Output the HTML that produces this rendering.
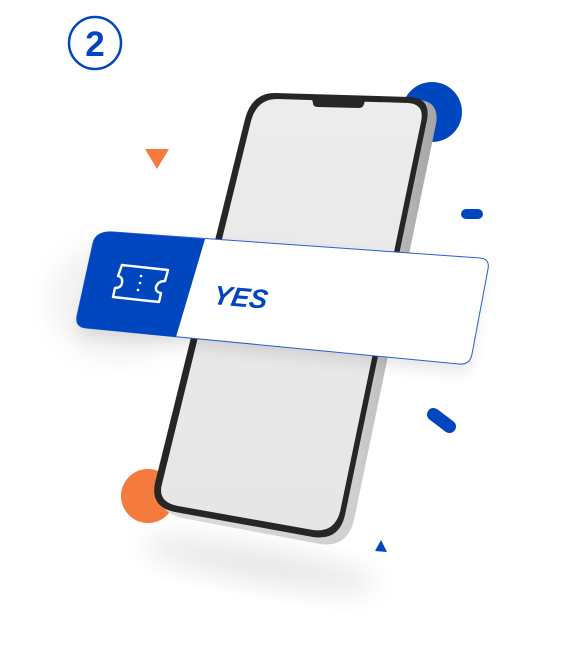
<!DOCTYPE html>
<html><head><meta charset="utf-8"><style>
html,body{margin:0;padding:0;background:#fff;width:565px;height:651px;overflow:hidden}
svg{display:block}
</style></head><body>
<svg width="565" height="651" viewBox="0 0 565 651" xmlns="http://www.w3.org/2000/svg">
<defs>
<filter id="blur" x="-50%" y="-50%" width="200%" height="200%"><feGaussianBlur stdDeviation="14"/></filter>
<filter id="blur2" x="-50%" y="-50%" width="200%" height="200%"><feGaussianBlur stdDeviation="8"/></filter>
<linearGradient id="silver" x1="0" y1="0" x2="1" y2="0">
<stop offset="0" stop-color="#dcdcdc"/><stop offset="0.7" stop-color="#cfcfcf"/><stop offset="1" stop-color="#a5a5a5"/></linearGradient>
<linearGradient id="scr" x1="0" y1="0" x2="0" y2="1">
<stop offset="0" stop-color="#ececec"/><stop offset="1" stop-color="#e6e6e6"/></linearGradient>
</defs>
<circle cx="95" cy="43" r="26" fill="none" stroke="#0046be" stroke-width="2.5"/>
<text x="95" y="56" text-anchor="middle" font-family="Liberation Sans, sans-serif" font-weight="bold" font-size="35" fill="#0046be">2</text>
<circle cx="432" cy="112" r="30" fill="#0046be"/>
<circle cx="148" cy="496" r="27" fill="#f57a3d"/>
<polygon points="145,149 169,149 157,169" fill="#f57a3d"/>
<rect x="461" y="209" width="22" height="10" rx="5" fill="#0046be"/>
<rect x="425" y="414" width="33" height="13" rx="6.5" fill="#0046be" transform="rotate(37 441.5 420.5)"/>
<polygon points="381,540 387,552 375,551" fill="#0046be"/>
<ellipse cx="260" cy="565" rx="120" ry="16" fill="#000" opacity="0.10" filter="url(#blur)" transform="rotate(10 260 565)"/>
<ellipse cx="120" cy="300" rx="70" ry="60" fill="#000" opacity="0.05" filter="url(#blur)"/>
<path d="M283,95 L418,100 Q440,101 436,124 L354,520 Q347,548 320,544 L182,518 Q156,512 162,488 L252,122 Q259,95 283,95 Z" fill="url(#silver)"/>
<path d="M275,93 L410,97 Q431,98 427,120 L345,515 Q339,541 313,537 L175,512 Q150,507 155,483 L245,119 Q252,93 275,93 Z" fill="#262626"/>
<path d="M277,99 L408,103 Q425,104 421,122 L340,512 Q334,533 313,530 L178,506 Q157,502 162,484 L251,121 Q257,99 277,99 Z" fill="url(#scr)"/>
<path d="M311,96 L366,98 L364,104 Q363,108 359,108 L318,107 Q313,107 313,103 Z" fill="#262626"/>
<path d="M103,240 L485,266 L468,372 L77,335 Z" fill="#000" opacity="0.10" filter="url(#blur2)"/>
<path d="M113,232 L480,258 Q490,259 488,269 L472,354 Q470,365 459,364 L86,328 Q75,327 77,316 L93,243 Q96,231 113,232 Z" fill="#fff" stroke="#2a5fd0" stroke-width="1"/>
<path d="M113,232 L205,239 L176,337 L86,328 Q75,327 77,316 L93,243 Q96,231 113,232 Z" fill="#0046be"/>
<path d="M122,265 L168,270 L165,281 Q158,281 156,287 Q155,292 161,293 L159,302 L113,297 L115,288 Q121,288 122,283 Q123,277 118,276 Z" fill="none" stroke="#fff" stroke-width="2.4" stroke-linejoin="round"/>
<circle cx="141" cy="276" r="1.3" fill="#fff"/><circle cx="140" cy="283" r="1.3" fill="#fff"/><circle cx="138" cy="290" r="1.3" fill="#fff"/>
<text x="0" y="0" font-family="Liberation Sans, sans-serif" font-weight="bold" font-style="italic" font-size="27" fill="#0046be" transform="translate(212,304) rotate(5) skewX(-6)">YES</text>
</svg>
</body></html>
